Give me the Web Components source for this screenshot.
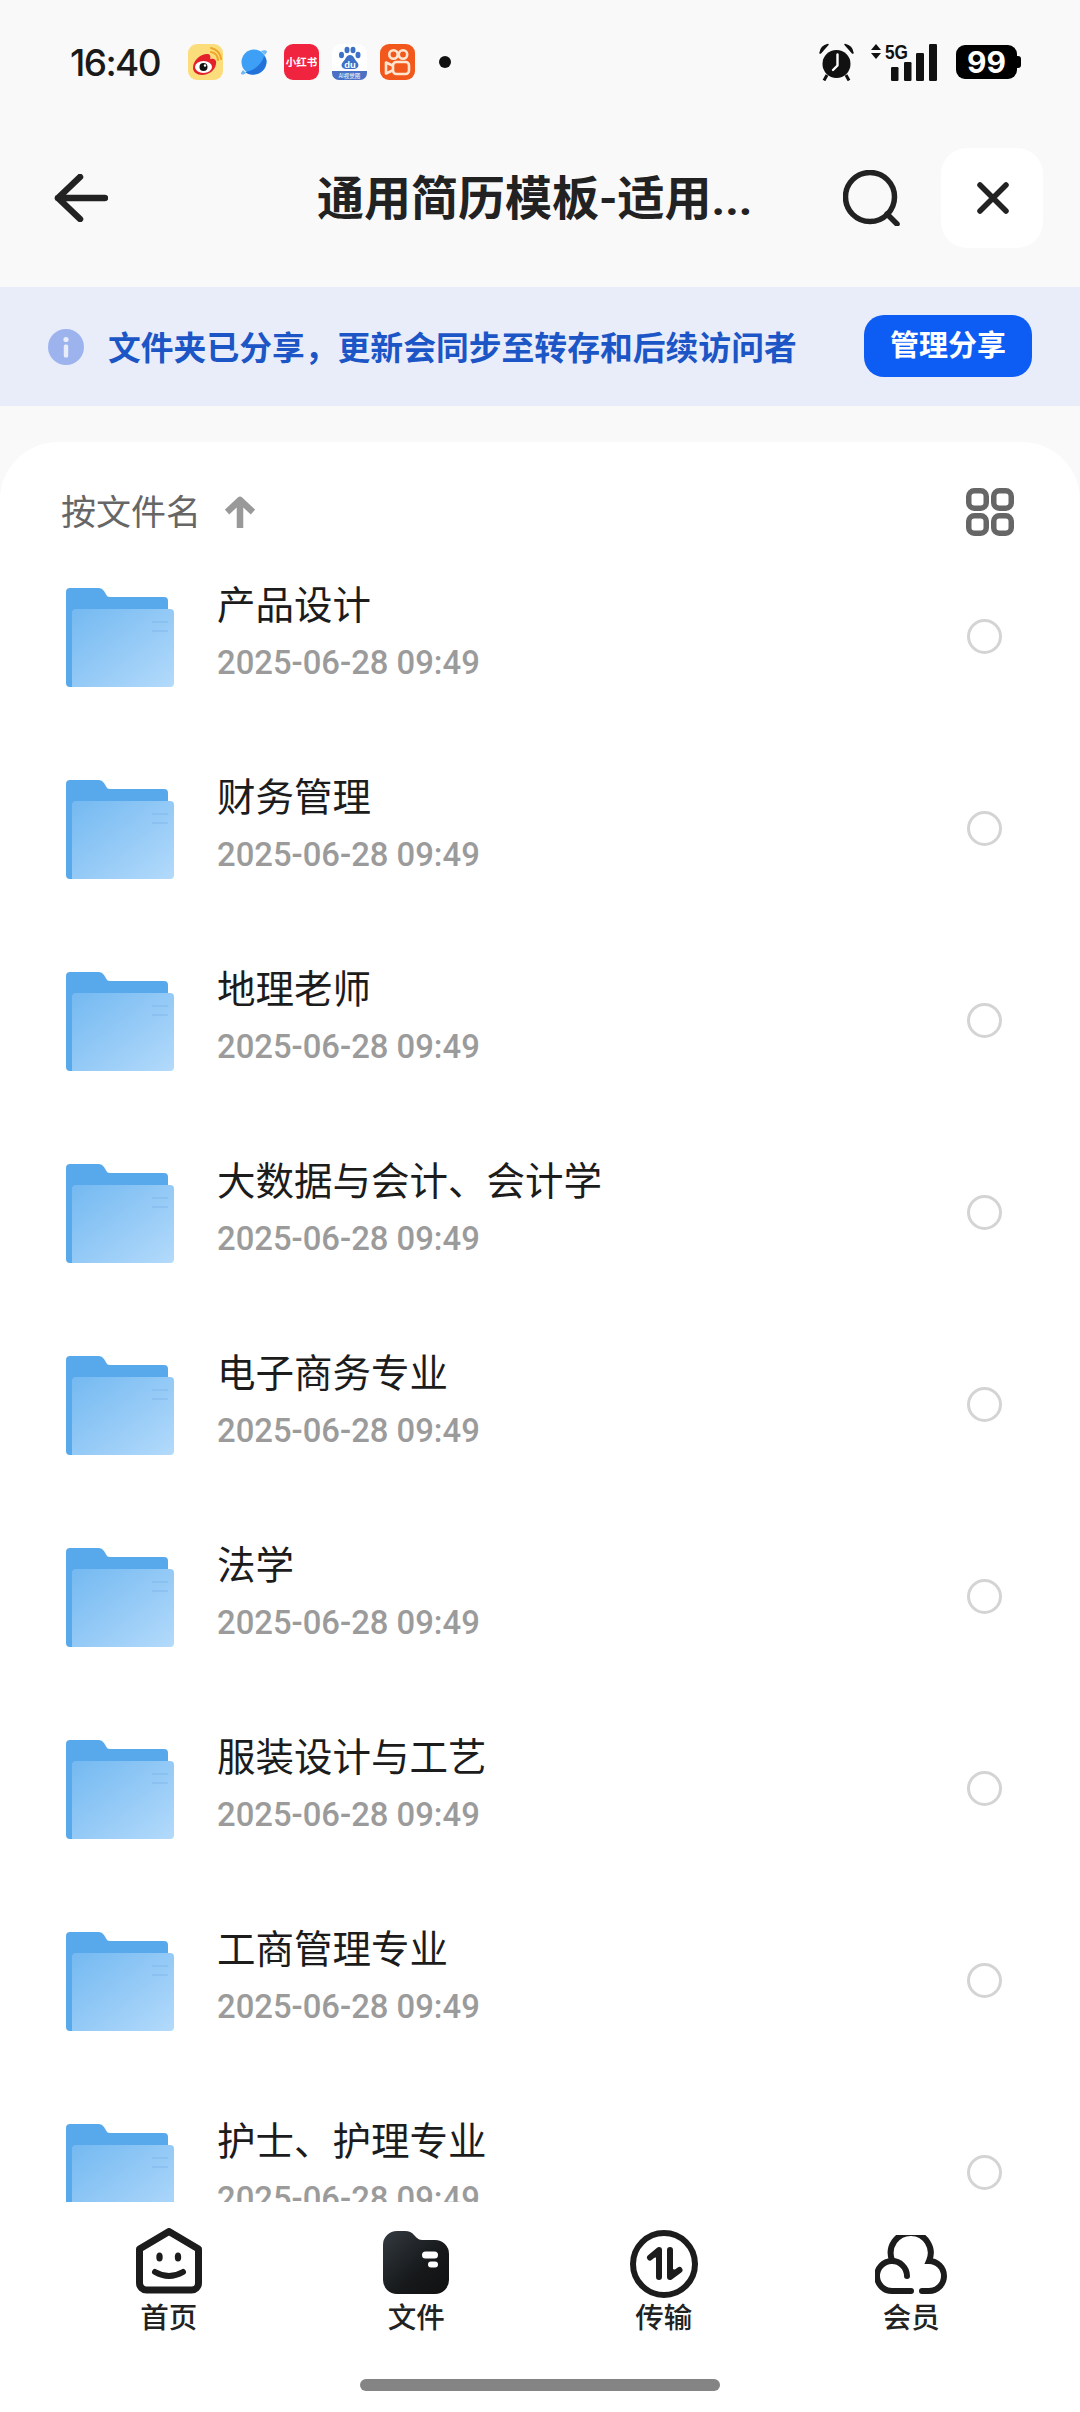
<!DOCTYPE html>
<html lang="zh-CN">
<head>
<meta charset="utf-8">
<title>通用简历模板</title>
<style>
    html, body{
        margin: 0;
        padding: 0;
        background-color: #f9f9f9;
    }
    body{
        font-family: Roboto, "Noto Sans CJK SC", sans-serif;
    }
    #app{
        display: flex;
        flex-direction: column;
        height: 2412px;
        overflow: hidden;
    }
</style>
</head>
<body>
<div id="app">
    <status-bar></status-bar>
    <app-header>通用简历模板-适用...</app-header>
    <share-banner>文件夹已分享，更新会同步至转存和后续访问者</share-banner>
    <file-list>
        <file-row date="2025-06-28 09:49">产品设计</file-row>
        <file-row date="2025-06-28 09:49">财务管理</file-row>
        <file-row date="2025-06-28 09:49">地理老师</file-row>
        <file-row date="2025-06-28 09:49">大数据与会计、会计学</file-row>
        <file-row date="2025-06-28 09:49">电子商务专业</file-row>
        <file-row date="2025-06-28 09:49">法学</file-row>
        <file-row date="2025-06-28 09:49">服装设计与工艺</file-row>
        <file-row date="2025-06-28 09:49">工商管理专业</file-row>
        <file-row date="2025-06-28 09:49">护士、护理专业</file-row>
    </file-list>
    <tab-bar>
        <tab-item label="首页">
            <svg slot="icon" width="66" height="66" viewBox="0 0 66 66" fill="none" stroke="#1c1c1c">
                <path d="M33 3.5 L3.5 21 V55 a7 7 0 0 0 7 7 H55.5 a7 7 0 0 0 7 -7 V21 Z" stroke-width="7" stroke-linejoin="round"/>
                <ellipse cx="23.5" cy="29" rx="3.2" ry="4.6" fill="#1c1c1c" stroke="none"/>
                <ellipse cx="42" cy="29" rx="3.2" ry="4.6" fill="#1c1c1c" stroke="none"/>
                <path d="M19 44 Q33 52 47 44" stroke-width="6" stroke-linecap="round"/>
            </svg>
        </tab-item>
        <tab-item label="文件">
            <svg slot="icon" width="66" height="66" viewBox="0 0 66 66">
                <defs>
                    <linearGradient id="fileDark" x1="0" y1="0" x2="1" y2="1">
                        <stop offset="0" stop-color="#333a40"/>
                        <stop offset="0.6" stop-color="#16181a"/>
                        <stop offset="1" stop-color="#111"/>
                    </linearGradient>
                </defs>
                <path d="M0 17 a14 14 0 0 1 14 -14 H22 q6 0 9 4 l3 3 q2 2 5 2 H52 a14 14 0 0 1 14 14 V52 a14 14 0 0 1 -14 14 H14 a14 14 0 0 1 -14 -14 Z" fill="url(#fileDark)"/>
                <rect x="39" y="23.5" width="16" height="7" rx="3.5" fill="#fff"/>
                <rect x="45" y="33.5" width="10" height="6" rx="3" fill="#fff"/>
            </svg>
        </tab-item>
        <tab-item label="传输">
            <svg slot="icon" width="68" height="68" viewBox="0 0 68 68" fill="none" stroke="#1c1c1c" style="margin-top:2px">
                <circle cx="34" cy="34" r="31" stroke-width="6"/>
                <path d="M29 47 V20 L20 27.5" stroke-width="6" stroke-linecap="round" stroke-linejoin="round"/>
                <path d="M19.5 27 L28 18.5 L30 28 Z" fill="#1c1c1c" stroke="none"/>
                <path d="M40 20 V47 L49.5 40" stroke-width="6" stroke-linecap="round" stroke-linejoin="round"/>
                <path d="M39 38 L50 41 L40 49 Z" fill="#1c1c1c" stroke="none"/>
            </svg>
        </tab-item>
        <tab-item label="会员">
            <svg slot="icon" width="72" height="60" viewBox="0 0 72 60" fill="none" stroke="#1c1c1c" stroke-width="6" stroke-linecap="round" style="margin-top:7px">
                <path d="M36 56 H18 A15 15 0 1 1 32 41"/>
                <path d="M17 25 A20 20 0 1 1 54 26 A15 15 0 0 1 54 56 H47"/>
            </svg>
        </tab-item>
    </tab-bar>
</div>

<script>
const statusTemplate = document.createElement("template");
statusTemplate.innerHTML = `
    <style>
        :host{
            display: flex;
            flex: none;
            height: 124px;
            align-items: center;
            padding: 0 63px 0 70px;
            color: #1a1a1a;
        }
        #time{
            font: 500 37px/1 Inter, Roboto, sans-serif;
            letter-spacing: -1.6px;
            width: 118px;
            font-feature-settings: "tnum" 0;
        }
        .apps{
            display: flex;
            gap: 13px;
            align-items: center;
        }
        .app{
            width: 35px;
            height: 36px;
            flex: none;
            display: block;
        }
        #xhs{
            border-radius: 9px;
            background-color: #f0243f;
            color: #fff;
            font: 700 10.5px/36px "Noto Sans CJK SC", sans-serif;
            text-align: center;
            white-space: nowrap;
        }
        #dot{
            width: 12px;
            height: 12px;
            border-radius: 50%;
            background-color: #111;
            margin-left: 11px;
        }
        .right{
            display: flex;
            align-items: center;
            margin-left: auto;
        }
        #signal{
            margin: -6px 0 0 15px;
        }
        #battery{
            display: flex;
            width: 61px;
            height: 34px;
            align-items: center;
            justify-content: center;
            background-color: #000;
            border-radius: 9px;
            color: #fff;
            font: 700 30px/34px Inter, Roboto, sans-serif;
            margin-left: 18px;
            position: relative;
        }
        #battery::after{
            content: "";
            position: absolute;
            right: -4px;
            top: 11px;
            width: 4px;
            height: 12px;
            background-color: #000;
            border-radius: 0 3px 3px 0;
        }
        svg text{
            font-family: "Liberation Sans", Roboto, sans-serif;
        }
    </style>
    <span id="time">16:40</span>
    <div class="apps">
        <svg class="app" viewBox="0 0 35 36">
            <rect width="35" height="36" rx="9" fill="#fcdd7c"/>
            <path d="M5 24 C5 16 13 10 19 10 C22 10 23 12 22 15 C26 14 29 16 28 20 C27 27 20 31 14 31 C9 31 5 28 5 24 Z" fill="#e3212b"/>
            <ellipse cx="15.5" cy="23" rx="8.5" ry="6" fill="#fff"/>
            <circle cx="15.5" cy="23" r="4" fill="#111"/>
            <circle cx="17" cy="21.5" r="1.2" fill="#fff"/>
            <path d="M23 8 A8 8 0 0 1 30 16 M23 4 A12 12 0 0 1 33 15" fill="none" stroke="#eea52b" stroke-width="2" stroke-linecap="round"/>
        </svg>
        <svg class="app" viewBox="0 0 35 36">
            <circle cx="18" cy="18" r="12.5" fill="#3d9ff6"/>
            <path d="M29.5 13 C30 21 24 29 13 30 C20 31 30 27 30.5 18 C30.5 16 30 14 29.5 13 Z M28 12 C26 20 18 27 9 28 C13 32 24 32 28.5 24 C31 19 30 14 28 12 Z" fill="#2272d9"/>
            <path d="M25 7 C28 6 31 6 31 8 L29 11 Z M10 29 C7 31 5 31 5 29 L7 26 Z" fill="#6db9f7"/>
        </svg>
        <div class="app" id="xhs">小红书</div>
        <svg class="app" viewBox="0 0 35 36">
            <rect width="35" height="36" rx="9" fill="#fff"/>
            <path d="M0 27 H35 V29 a7 7 0 0 1 -7 7 H7 a7 7 0 0 1 -7 -7 Z" fill="#4a71c4"/>
            <g fill="#3d70c6">
                <ellipse cx="9.5" cy="11" rx="2.5" ry="3.2"/>
                <ellipse cx="15" cy="6" rx="2.5" ry="3.2"/>
                <ellipse cx="21" cy="6" rx="2.5" ry="3.2"/>
                <ellipse cx="26" cy="11" rx="2.5" ry="3.2"/>
                <path d="M18 11 C22 11 22 15 25 18 C28 21 26 25 22 25 H14 C10 25 8 21 11 18 C14 15 14 11 18 11 Z"/>
            </g>
            <text x="18" y="23.5" text-anchor="middle" font-size="9.5" font-weight="700" fill="#fff">du</text>
            <text x="17.5" y="33.5" text-anchor="middle" font-size="5.5" fill="#fff" style="font-family:'Noto Sans CJK SC',sans-serif">AI视觉图</text>
        </svg>
        <svg class="app" viewBox="0 0 35 36">
            <rect width="35" height="36" rx="9" fill="#f2581b"/>
            <g fill="none" stroke="#fde5cf" stroke-width="2.6" stroke-linejoin="round">
                <circle cx="13.5" cy="10.5" r="4.2"/>
                <circle cx="23" cy="10.5" r="4.2"/>
                <rect x="13" y="18" width="16" height="12" rx="3.5"/>
                <path d="M12.5 21.5 L6 18.5 V29.5 L12.5 26.5"/>
            </g>
        </svg>
        <div id="dot"></div>
    </div>
    <div class="right">
        <svg width="37" height="38" viewBox="0 0 37 38">
            <circle cx="18.5" cy="21" r="14" fill="#111"/>
            <path d="M2 10 Q3 3 10 1.5 L2.5 10 Z M35 10 Q34 3 27 1.5 L34.5 10 Z" fill="#111" stroke="#111" stroke-width="1.5" stroke-linejoin="round"/>
            <path d="M9 32 L6 37.5 M28 32 L31 37.5" stroke="#111" stroke-width="3"/>
            <path d="M19.5 11.5 V22.5 L15 27" fill="none" stroke="#fff" stroke-width="2.4" stroke-linecap="round" stroke-linejoin="round"/>
        </svg>
        <svg id="signal" width="68" height="44" viewBox="0 -6 68 44">
            <path d="M1 7 L6 1 L11 7 Z M1 10 H11 L6 16 Z" fill="#111"/>
            <text x="15" y="16" font-size="21" font-weight="700" fill="#111" textLength="23" lengthAdjust="spacingAndGlyphs">5G</text>
            <rect x="21" y="24" width="7.5" height="14" rx="1.2" fill="#111"/>
            <rect x="34" y="19" width="7.5" height="19" rx="1.2" fill="#111"/>
            <rect x="46" y="10" width="8" height="28" rx="1.2" fill="#111"/>
            <rect x="59" y="1" width="8" height="37" rx="1.2" fill="#111"/>
        </svg>
        <div id="battery">99</div>
    </div>
`;

class StatusBar extends HTMLElement{
    constructor(){
        super();
        this.attachShadow({mode:"open"});
        this.shadowRoot.appendChild(statusTemplate.content.cloneNode(true));
    }
}

const headerTemplate = document.createElement("template");
headerTemplate.innerHTML = `
    <style>
        :host{
            display: flex;
            flex: none;
            height: 148px;
            align-items: center;
            padding: 0 37px 0 54px;
            color: #222;
        }
        #title{
            font: 700 47px/1 Roboto, "Noto Sans CJK SC", sans-serif;
            margin-left: 209px;
            white-space: nowrap;
        }
        #search{
            margin-left: auto;
        }
        #close{
            display: flex;
            width: 102px;
            height: 100px;
            margin-left: 41px;
            padding-left: 2px;
            box-sizing: border-box;
            align-items: center;
            justify-content: center;
            background-color: #fff;
            border-radius: 26px;
        }
    </style>
    <svg width="54" height="48" viewBox="0 0 54 48" fill="none" stroke="#222" stroke-width="6.5" stroke-linecap="round" stroke-linejoin="round">
        <path d="M51 24 H4 M26 3 L4 24 L26 45"/>
    </svg>
    <div id="title"><slot></slot></div>
    <svg id="search" width="57" height="56" viewBox="0 0 57 56" fill="none" stroke="#222" stroke-width="5.5">
        <circle cx="27" cy="27" r="24.5"/>
        <path d="M44 44 L54 54" stroke-linecap="round"/>
    </svg>
    <div id="close">
        <svg width="32" height="32" viewBox="0 0 32 32" fill="none" stroke="#222" stroke-width="5.5" stroke-linecap="round">
            <path d="M3 3 L29 29 M29 3 L3 29"/>
        </svg>
    </div>
`;

class AppHeader extends HTMLElement{
    constructor(){
        super();
        this.attachShadow({mode:"open"});
        this.shadowRoot.appendChild(headerTemplate.content.cloneNode(true));
    }
}

const bannerTemplate = document.createElement("template");
bannerTemplate.innerHTML = `
    <style>
        :host{
            display: flex;
            flex: none;
            height: 119px;
            margin: 15px 0 36px;
            padding: 0 48px;
            align-items: center;
            background-color: #e9edfa;
        }
        #text{
            margin-left: 24px;
            color: #1c55c6;
            font: 700 32.8px/1 "Noto Sans CJK SC", sans-serif;
            white-space: nowrap;
        }
        button{
            margin-left: auto;
            width: 168px;
            height: 62px;
            margin-top: -1px;
            border: none;
            border-radius: 20px;
            padding: 0 0 5px;
            background-color: #0d5cf4;
            color: #fff;
            font: 700 29px/1 "Noto Sans CJK SC", sans-serif;
        }
    </style>
    <svg width="36" height="36" viewBox="0 0 36 36">
        <circle cx="18" cy="18" r="18" fill="#9db3ee"/>
        <circle cx="18" cy="10.5" r="2.6" fill="#e9edfa"/>
        <rect x="15.8" y="15.5" width="4.4" height="13" rx="1.6" fill="#e9edfa"/>
    </svg>
    <div id="text"><slot></slot></div>
    <button>管理分享</button>
`;

class ShareBanner extends HTMLElement{
    constructor(){
        super();
        this.attachShadow({mode:"open"});
        this.shadowRoot.appendChild(bannerTemplate.content.cloneNode(true));
    }
}

const listTemplate = document.createElement("template");
listTemplate.innerHTML = `
    <style>
        :host{
            display: block;
            flex: 1;
            min-height: 0;
            overflow: hidden;
            background-color: #fff;
            border-radius: 58px 58px 0 0;
        }
        #sort{
            display: flex;
            height: 60px;
            margin-top: 40px;
            padding: 0 66px 0 61px;
            align-items: center;
        }
        #label{
            margin-top: -6px;
            color: #666;
            font: 400 35px/1 "Noto Sans CJK SC", sans-serif;
        }
        #arrow{
            margin-left: 24px;
        }
        #grid{
            margin-left: auto;
        }
    </style>
    <div id="sort">
        <span id="label">按文件名</span>
        <svg id="arrow" width="30" height="32" viewBox="0 0 30 32" fill="none" stroke="#999" stroke-width="6.5" stroke-linejoin="round">
            <path d="M15 32 V4 M2 16 L15 4 L28 16"/>
        </svg>
        <svg id="grid" width="48" height="48" viewBox="0 0 48 48" fill="none" stroke="#666" stroke-width="5.5">
            <rect x="2.75" y="2.75" width="17.5" height="17.5" rx="5.5"/>
            <rect x="27.75" y="2.75" width="17.5" height="17.5" rx="5.5"/>
            <rect x="2.75" y="27.75" width="17.5" height="17.5" rx="5.5"/>
            <rect x="27.75" y="27.75" width="17.5" height="17.5" rx="5.5"/>
        </svg>
    </div>
    <slot></slot>
`;

class FileList extends HTMLElement{
    constructor(){
        super();
        this.attachShadow({mode:"open"});
        this.shadowRoot.appendChild(listTemplate.content.cloneNode(true));
    }
}

const rowTemplate = document.createElement("template");
rowTemplate.innerHTML = `
    <style>
        :host{
            display: flex;
            height: 192px;
            padding: 0 78px 0 66px;
            align-items: center;
        }
        #folder{
            flex: none;
            display: block;
            margin-top: -2px;
        }
        .card-text{
            margin-left: 43px;
            margin-top: -15px;
            min-width: 0;
        }
        #name{
            color: #1c1c1c;
            font: 400 38.5px/50px "Noto Sans CJK SC", sans-serif;
            white-space: nowrap;
        }
        #date{
            margin-top: 14px;
            color: #9b9b9b;
            font: 500 32.8px/44px Roboto, sans-serif;
            white-space: nowrap;
        }
        #radio{
            flex: none;
            box-sizing: border-box;
            width: 35px;
            height: 35px;
            margin-left: auto;
            margin-top: -3px;
            border: 3.5px solid #d4d4d4;
            border-radius: 50%;
        }
    </style>
    <svg id="folder" width="108" height="99" viewBox="0 0 108 99">
        <defs>
            <linearGradient id="front" x1="0" y1="0" x2="1" y2="1">
                <stop offset="0" stop-color="#74b9f1"/>
                <stop offset="1" stop-color="#b3dafb"/>
            </linearGradient>
        </defs>
        <path d="M0 4 a4 4 0 0 1 4 -4 H33 q3 0 5 3 l3 5 q1 1 3 1 H98 a4 4 0 0 1 4 4 V95 a4 4 0 0 1 -4 4 H4 a4 4 0 0 1 -4 -4 Z" fill="#58a9ec"/>
        <path d="M6 25 a4 4 0 0 1 4 -4 H104 a4 4 0 0 1 4 4 V95 a4 4 0 0 1 -4 4 H6 Z" fill="url(#front)"/>
        <path d="M86 34 H102 M86 43 H102" stroke="#7db8ec" stroke-width="1.5" opacity="0.6"/>
    </svg>
    <div class="card-text">
        <div id="name"><slot></slot></div>
        <div id="date"></div>
    </div>
    <div id="radio"></div>
`;

class FileRow extends HTMLElement{
    constructor(){
        super();
        this.attachShadow({mode:"open"});
        this.shadowRoot.appendChild(rowTemplate.content.cloneNode(true));
    }

    connectedCallback(){
        this.shadowRoot.getElementById("date").textContent = this.getAttribute("date");
    }
}

const tabBarTemplate = document.createElement("template");
tabBarTemplate.innerHTML = `
    <style>
        :host{
            display: grid;
            flex: none;
            height: 210px;
            padding: 0 45px;
            grid-template-columns: repeat(4, 1fr);
            background-color: #fff;
            position: relative;
        }
        #home-bar{
            position: absolute;
            left: 360px;
            top: 177px;
            width: 360px;
            height: 12px;
            border-radius: 6px;
            background-color: #848484;
        }
    </style>
    <slot></slot>
    <div id="home-bar"></div>
`;

class TabBar extends HTMLElement{
    constructor(){
        super();
        this.attachShadow({mode:"open"});
        this.shadowRoot.appendChild(tabBarTemplate.content.cloneNode(true));
    }
}

const tabItemTemplate = document.createElement("template");
tabItemTemplate.innerHTML = `
    <style>
        :host{
            display: flex;
            flex-direction: column;
            align-items: center;
            padding-top: 26px;
        }
        #icon{
            display: flex;
            height: 68px;
            align-items: flex-start;
        }
        #label{
            margin-top: 2px;
            color: #222;
            font: 500 28.5px/36px "Noto Sans CJK SC", sans-serif;
        }
    </style>
    <div id="icon"><slot name="icon"></slot></div>
    <div id="label"></div>
`;

class TabItem extends HTMLElement{
    constructor(){
        super();
        this.attachShadow({mode:"open"});
        this.shadowRoot.appendChild(tabItemTemplate.content.cloneNode(true));
    }

    connectedCallback(){
        this.shadowRoot.getElementById("label").textContent = this.getAttribute("label");
    }
}

customElements.define("status-bar", StatusBar);
customElements.define("app-header", AppHeader);
customElements.define("share-banner", ShareBanner);
customElements.define("file-list", FileList);
customElements.define("file-row", FileRow);
customElements.define("tab-bar", TabBar);
customElements.define("tab-item", TabItem);
</script>
</body>
</html>
